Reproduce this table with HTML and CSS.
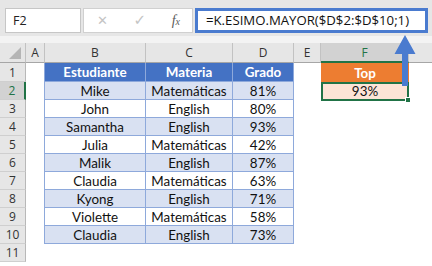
FILE: index.html
```html
<!DOCTYPE html>
<html lang="es">
<head>
<meta charset="utf-8">
<title>K.ESIMO.MAYOR</title>
<link rel="stylesheet" href="styles.css">
</head>
<body>
<div class="app">
  <div class="topbar">
    <div class="namebox">F2</div>
    <div class="buttons">
      <span class="btn cancel">&#x2715;</span>
      <span class="btn enter">&#x2713;</span>
      <span class="btn fx"><i>f</i><i class="x">x</i></span>
    </div>
    <div class="formula">=K.ESIMO.MAYOR($D$2:$D$10;1)</div>
  </div>
  <div class="spacer"></div>

  <div class="sheet">
    <!-- column headers -->
    <div class="ch corner"><span class="tri"></span></div>
    <div class="ch">A</div>
    <div class="ch">B</div>
    <div class="ch">C</div>
    <div class="ch">D</div>
    <div class="ch">E</div>
    <div class="ch sel">F</div>
    <div class="ch last"></div>

    <!-- row 1 -->
    <div class="rh">1</div>
    <div class="c edge"></div>
    <div class="c th">Estudiante</div>
    <div class="c th">Materia</div>
    <div class="c th">Grado</div>
    <div class="c"></div>
    <div class="c top-h">Top</div>
    <div class="c"></div>

    <!-- row 2 -->
    <div class="rh sel">2</div>
    <div class="c edge"></div>
    <div class="c td band">Mike</div>
    <div class="c td band">Matemáticas</div>
    <div class="c td band">81%</div>
    <div class="c"></div>
    <div class="c top-v">93%<span class="cursor"><span class="handle"></span></span></div>
    <div class="c"></div>

    <!-- row 3 -->
    <div class="rh">3</div>
    <div class="c edge"></div>
    <div class="c td">John</div>
    <div class="c td">English</div>
    <div class="c td">80%</div>
    <div class="c"></div><div class="c"></div><div class="c"></div>

    <!-- row 4 -->
    <div class="rh">4</div>
    <div class="c edge"></div>
    <div class="c td band">Samantha</div>
    <div class="c td band">English</div>
    <div class="c td band">93%</div>
    <div class="c"></div><div class="c"></div><div class="c"></div>

    <!-- row 5 -->
    <div class="rh">5</div>
    <div class="c edge"></div>
    <div class="c td">Julia</div>
    <div class="c td">Matemáticas</div>
    <div class="c td">42%</div>
    <div class="c"></div><div class="c"></div><div class="c"></div>

    <!-- row 6 -->
    <div class="rh">6</div>
    <div class="c edge"></div>
    <div class="c td band">Malik</div>
    <div class="c td band">English</div>
    <div class="c td band">87%</div>
    <div class="c"></div><div class="c"></div><div class="c"></div>

    <!-- row 7 -->
    <div class="rh">7</div>
    <div class="c edge"></div>
    <div class="c td">Claudia</div>
    <div class="c td">Matemáticas</div>
    <div class="c td">63%</div>
    <div class="c"></div><div class="c"></div><div class="c"></div>

    <!-- row 8 -->
    <div class="rh">8</div>
    <div class="c edge"></div>
    <div class="c td band">Kyong</div>
    <div class="c td band">English</div>
    <div class="c td band">71%</div>
    <div class="c"></div><div class="c"></div><div class="c"></div>

    <!-- row 9 -->
    <div class="rh">9</div>
    <div class="c edge"></div>
    <div class="c td">Violette</div>
    <div class="c td">Matemáticas</div>
    <div class="c td">58%</div>
    <div class="c"></div><div class="c"></div><div class="c"></div>

    <!-- row 10 -->
    <div class="rh">10</div>
    <div class="c edge"></div>
    <div class="c td band">Claudia</div>
    <div class="c td band">English</div>
    <div class="c td band">73%</div>
    <div class="c"></div><div class="c"></div><div class="c"></div>

    <!-- row 11 -->
    <div class="rh">11</div>
    <div class="c"></div><div class="c"></div><div class="c"></div>
    <div class="c"></div><div class="c"></div><div class="c"></div><div class="c"></div>
  </div>

  <!-- callout arrow from the result cell up to the formula bar -->
  <svg class="arrow" width="22" height="52" viewBox="0 0 22 52">
    <path d="M11 0 L21.5 19 L14 19 L14 51 L8 51 L8 19 L0.5 19 Z" fill="#4a7bcf"/>
  </svg>
</div>
</body>
</html>
```
FILE: styles.css
```css
* { box-sizing: border-box; }

html, body {
  margin: 0;
  padding: 0;
  background: #ffffff;
}

.app {
  position: relative;
  width: 432px;
  height: 266px;
  overflow: hidden;
  background: #ffffff;
}

/* ---------- formula bar ---------- */
.topbar {
  height: 36px;
  background: #e6e6e6;
  display: flex;
  gap: 2px;
  padding: 8px 4px 3px 5px;
}

.namebox {
  width: 76px;
  height: 25px;
  background: #ffffff;
  border: 1px solid #c6c6c6;
  font-family: "Open Sans", "Noto Sans", sans-serif;
  font-size: 12.5px;
  color: #222;
  line-height: 23px;
  padding-left: 7px;
}

.buttons {
  width: 110px;
  height: 25px;
  background: #ffffff;
  border: 1px solid #d0d0d0;
  display: flex;
  align-items: center;
  justify-content: space-between;
  padding: 0 12px 0 13px;
}

.btn {
  font-family: "DejaVu Sans", sans-serif;
  color: #c4c4c4;
  font-size: 13px;
  line-height: 1;
}

.btn.enter { font-size: 15px; }

.btn.fx {
  font-family: "Liberation Serif", serif;
  color: #5a5a5a;
  font-size: 14px;
}
.btn.fx .x { font-size: 10px; }

.formula {
  flex: 1;
  height: 25px;
  background: #ffffff;
  border: 3px solid #4a7bcf;
  font-family: "Open Sans", "Noto Sans", sans-serif;
  font-size: 13.2px;
  color: #111;
  line-height: 19px;
  padding-left: 8px;
  white-space: nowrap;
}

.spacer {
  height: 7px;
  background: #f3f3f3;
}

/* ---------- worksheet grid ---------- */
.sheet {
  display: grid;
  grid-template-columns: 26px 19px 101px 87px 61px 27px 88px 1fr;
  grid-template-rows: 20px 19px repeat(10, 18px) 19px;
}

.ch {
  background: #e6e6e6;
  border-right: 1px solid #c2c2c2;
  border-bottom: 1px solid #a6a6a6;
  font-family: "Open Sans", "Noto Sans", sans-serif;
  font-size: 12px;
  color: #333;
  display: flex;
  align-items: center;
  justify-content: center;
}

.ch.last { border-right: none; }

.ch.sel {
  background: #d2d2d2;
  color: #217346;
  border-bottom: 2px solid #217346;
}

.corner { position: relative; }
.corner .tri {
  position: absolute;
  right: 4px;
  bottom: 3px;
  width: 0;
  height: 0;
  border-left: 12px solid transparent;
  border-bottom: 12px solid #b5b5b5;
}

.rh {
  background: #e6e6e6;
  border-right: 1px solid #b8b8b8;
  border-bottom: 1px solid #cfcfcf;
  font-family: "Open Sans", "Noto Sans", sans-serif;
  font-size: 12px;
  color: #333;
  display: flex;
  align-items: center;
  justify-content: center;
}

.rh.sel {
  background: #d2d2d2;
  color: #217346;
  border-right: 2px solid #217346;
}

.c {
  font-family: "Lato", "Open Sans", sans-serif;
  font-size: 13.4px;
  color: #111;
  display: flex;
  align-items: center;
  justify-content: center;
  white-space: nowrap;
  overflow: hidden;
}

.c.edge { border-right: 1px solid #8ea9db; }

.c.th {
  background: #4472c4;
  color: #ffffff;
  font-weight: bold;
  border-right: 1px solid #8ea9db;
  border-bottom: 1px solid #8ea9db;
}

.c.td {
  background: #ffffff;
  border-right: 1px solid #8ea9db;
  border-bottom: 1px solid #8ea9db;
}

.c.td.band { background: #d9e1f2; }

.c.top-h {
  background: #ed7d31;
  color: #ffffff;
  font-weight: bold;
}

.c.top-v {
  background: #fce4d6;
  position: relative;
  overflow: visible;
}

/* active-cell frame with fill handle */
.cursor {
  position: absolute;
  left: 0;
  top: 0;
  right: 0;
  bottom: -1px;
  border: 2px solid #217346;
}

.handle {
  position: absolute;
  right: -4px;
  bottom: -4px;
  width: 6px;
  height: 6px;
  background: #217346;
  border: 1px solid #ffffff;
}

.arrow {
  position: absolute;
  left: 394px;
  top: 35px;
}
```
